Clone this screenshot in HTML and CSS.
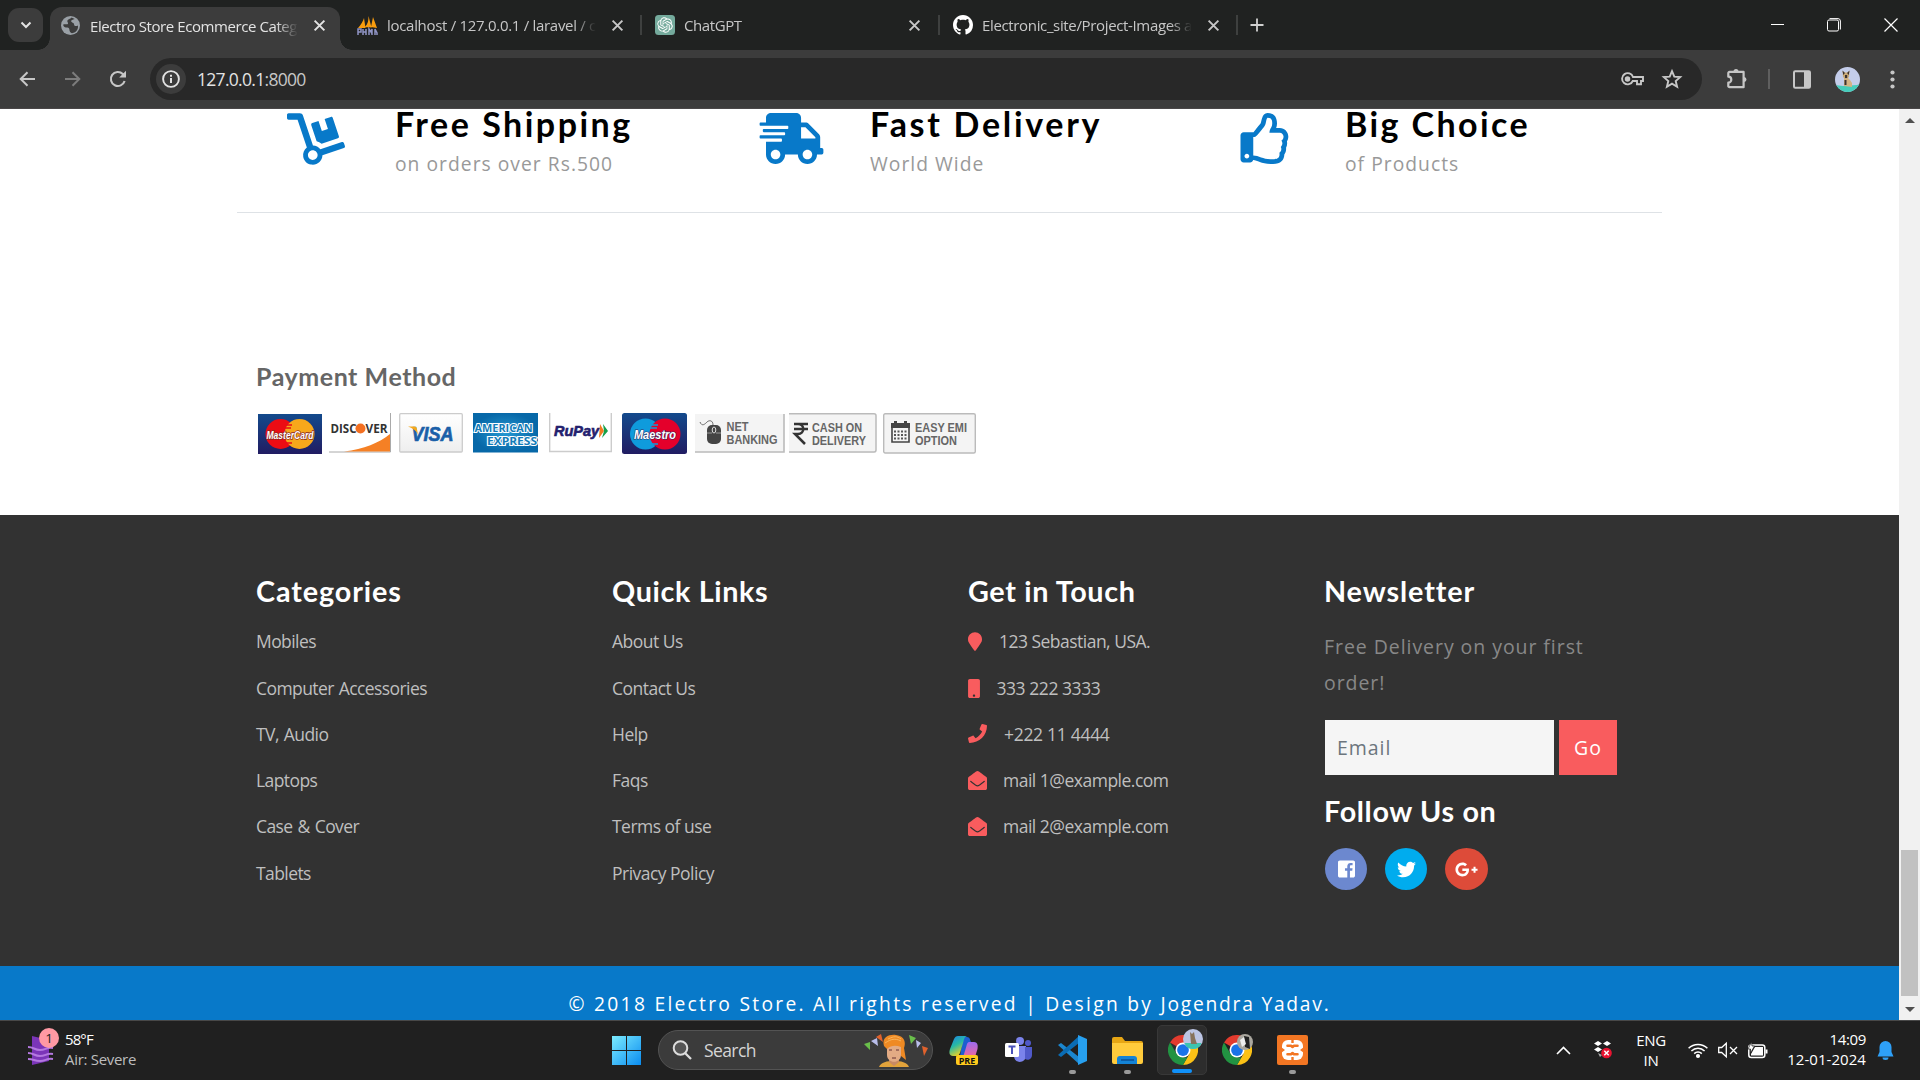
FILE: index.html
```html
<!DOCTYPE html>
<html lang="en">
<head>
<meta charset="utf-8">
<title>Electro Store Ecommerce Category</title>
<link rel="stylesheet" href="styles.css">
</head>
<body>
<svg class="defs" aria-hidden="true">
  <symbol id="x" viewBox="0 0 12 12"><path d="M1.5 1.5l9 9M10.5 1.5l-9 9" fill="none" stroke="currentColor" stroke-width="1.8"/></symbol>
  <symbol id="mail" viewBox="0 0 512 512"><path d="M512 464c0 26.51-21.49 48-48 48H48c-26.51 0-48-21.49-48-48V200.724a48 48 0 0 1 18.387-37.776c24.913-19.529 45.501-35.365 164.2-121.511C199.412 29.17 232.797-.347 256 .003c23.198-.354 56.596 29.172 73.413 41.433 118.687 86.137 139.303 101.995 164.2 121.512A48 48 0 0 1 512 200.724V464zm-65.666-196.605c-2.563-3.728-7.7-4.595-11.339-1.907-22.845 16.873-55.462 40.705-105.582 77.079-16.825 12.266-50.21 41.781-73.413 41.43-23.211.344-56.559-29.143-73.413-41.43-50.114-36.37-82.734-60.204-105.582-77.079-3.639-2.688-8.776-1.821-11.339 1.907l-9.072 13.196a7.998 7.998 0 0 0 1.839 10.967c22.887 16.899 55.454 40.69 105.303 76.868 20.274 14.781 56.524 47.813 92.264 47.573 35.724.242 71.961-32.771 92.263-47.573 49.85-36.179 82.418-59.97 105.303-76.868a7.998 7.998 0 0 0 1.839-10.967l-9.071-13.196z"/></symbol>
  <symbol id="chrome" viewBox="0 0 48 48">
    <path d="M24 24L3.2 12A24 24 0 0 1 44.8 12z" fill="#e33b2e"/>
    <path d="M24 12h20.8A24 24 0 0 1 24 48l10.4-18z" fill="#fbc116"/>
    <path d="M3.2 12L13.6 30 24 36h6.9L24 48A24 24 0 0 1 3.2 12z" fill="#229342"/>
    <circle cx="24" cy="24" r="12" fill="#fff"/><circle cx="24" cy="24" r="9.4" fill="#1a73e8"/>
  </symbol>
</svg>

<header class="tabs">
  <button class="tab-search"><svg width="12" height="8" viewBox="0 0 12 8"><path d="M1.5 1.5L6 6l4.500-4.500" fill="none" stroke="#e3e3e3" stroke-width="2"/></svg></button>
  <div class="tab active">
    <svg width="19" height="19" viewBox="0 0 18 18"><circle cx="9" cy="9" r="9" fill="#9aa0a6"/><path d="M10 1.500c-1 1.500-4 1.500-4 3.500 0 1 1 1.400.6 2.400C6 8.600 3.500 7 2 8.200 2.200 10 4 11 6 11c1.400 0 2 1 2 2.200 0 1.500 1 2.600 2.400 3.200C15 15.500 16.600 12 16 9c-1.600 1-3.500.6-3.600-1C12.300 6 10 6.500 9.600 5 9.400 4 11 3.400 13 2.800z" fill="#3c3c3c"/></svg>
    <span class="tab-title t1">Electro Store Ecommerce Categ</span>
    <svg class="close" width="13" height="13"><use href="#x"/></svg>
  </div>
  <div class="tab">
    <svg width="21" height="21" viewBox="0 0 21 21"><path d="M1 13C4 10 6 6 7 3l1.500 10zM8 12c3-3 3.500-7 3.500-11l3 11.500zM14 12l2-10 4 11z" fill="#f89c0e"/><path d="M1 20v-6h3v3H1m5 3v-6m0 3h3v3m0-6v6m3 0v-6l2 3 1-3v6m3 0v-6l2 4v2" fill="none" stroke="#8f94c4" stroke-width="1.500"/></svg>
    <span class="tab-title t2">localhost / 127.0.0.1 / laravel / c</span>
    <svg class="close" width="13" height="13"><use href="#x"/></svg>
  </div>
  <div class="tab">
    <svg width="20" height="20" viewBox="0 0 20 20"><rect width="20" height="20" rx="3.500" fill="#74aa9c"/><path transform="translate(2.200 2.200) scale(.65)" fill="#fff" d="M22.282 9.821a5.985 5.985 0 0 0-.516-4.91 6.046 6.046 0 0 0-6.51-2.9A6.065 6.065 0 0 0 4.981 4.182a5.985 5.985 0 0 0-3.998 2.9 6.046 6.046 0 0 0 .743 7.097 5.98 5.98 0 0 0 .511 4.91 6.051 6.051 0 0 0 6.515 2.9A5.985 5.985 0 0 0 13.26 24a6.056 6.056 0 0 0 5.772-4.206 5.99 5.99 0 0 0 3.997-2.9 6.056 6.056 0 0 0-.747-7.073zM13.26 22.43a4.476 4.476 0 0 1-2.876-1.041l.142-.08 4.778-2.758a.795.795 0 0 0 .393-.682v-6.737l2.02 1.169a.071.071 0 0 1 .038.052v5.583a4.504 4.504 0 0 1-4.495 4.494zM3.6 18.304a4.47 4.47 0 0 1-.535-3.014l.142.085 4.783 2.759a.771.771 0 0 0 .78 0l5.843-3.369v2.332a.08.08 0 0 1-.033.062L9.74 19.95a4.5 4.5 0 0 1-6.14-1.646zM2.34 7.896a4.485 4.485 0 0 1 2.366-1.973V11.6a.766.766 0 0 0 .388.677l5.815 3.354-2.02 1.168a.076.076 0 0 1-.071 0l-4.83-2.786A4.504 4.504 0 0 1 2.34 7.872zm16.597 3.855l-5.833-3.387L15.12 7.2a.076.076 0 0 1 .071 0l4.83 2.791a4.494 4.494 0 0 1-.676 8.105v-5.678a.79.79 0 0 0-.407-.667zm2.01-3.023l-.141-.085-4.774-2.782a.776.776 0 0 0-.785 0L9.409 9.23V6.897a.066.066 0 0 1 .028-.061l4.83-2.787a4.5 4.5 0 0 1 6.68 4.66zM8.307 12.863l-2.02-1.164a.08.08 0 0 1-.038-.057V6.075a4.5 4.5 0 0 1 7.375-3.453l-.142.08L8.704 5.46a.795.795 0 0 0-.393.681zm1.097-2.365l2.602-1.5 2.607 1.5v2.999l-2.597 1.5-2.607-1.5z"/></svg>
    <span class="tab-title t3">ChatGPT</span>
    <svg class="close" width="13" height="13"><use href="#x"/></svg>
  </div>
  <div class="tab">
    <svg width="20" height="20" viewBox="0 0 16 16"><path fill="#fff" d="M8 0C3.580 0 0 3.580 0 8c0 3.540 2.290 6.530 5.470 7.590.4.070.55-.17.55-.38 0-.19-.01-.82-.01-1.490-2.010.37-2.530-.49-2.690-.94-.09-.23-.48-.94-.82-1.130-.28-.15-.68-.52-.01-.53.63-.01 1.080.58 1.230.82.72 1.210 1.870.87 2.330.66.070-.52.28-.87.51-1.070-1.780-.2-3.640-.89-3.640-3.950 0-.87.31-1.590.82-2.150-.08-.2-.36-1.020.08-2.120 0 0 .67-.21 2.200.82.64-.18 1.320-.27 2-.27s1.360.09 2 .27c1.530-1.040 2.200-.82 2.200-.82.44 1.100.16 1.920.08 2.120.51.56.82 1.270.82 2.150 0 3.070-1.870 3.750-3.650 3.950.29.25.54.73.54 1.480 0 1.070-.01 1.930-.01 2.200 0 .21.15.46.55.38A8.013 8.013 0 0016 8c0-4.420-3.580-8-8-8z"/></svg>
    <span class="tab-title t4">Electronic_site/Project-Images a</span>
    <svg class="close" width="13" height="13"><use href="#x"/></svg>
  </div>
  <svg class="new-tab" width="14" height="14" viewBox="0 0 14 14"><path d="M7 .5v13M.5 7h13" stroke="#d0d0d0" stroke-width="1.800"/></svg>
  <div class="win-controls">
    <svg width="13" height="14" viewBox="0 0 13 14"><path d="M0 6.500h13" stroke="#fff"/></svg>
    <svg width="14" height="14" viewBox="0 0 14 14" fill="none" stroke="#fff"><rect x=".5" y="2" width="11" height="11" rx="1.500"/><path d="M2.500.6H11A2.500 2.500 0 0 1 13.400 3v8.500"/></svg>
    <svg width="14" height="14" viewBox="0 0 14 14"><path d="M.5.5l13 13M13.500.5l-13 13" stroke="#fff" stroke-width="1.200"/></svg>
  </div>
</header>

<nav class="toolbar">
  <svg class="back" width="17" height="16" viewBox="0 0 17 16" fill="none" stroke="#c7c7c7" stroke-width="2"><path d="M16 8H2M8.500 1.200L1.700 8l6.800 6.800"/></svg>
  <svg class="fwd" width="17" height="16" viewBox="0 0 17 16" fill="none" stroke="#7c7c7c" stroke-width="2"><path d="M1 8h14M8.500 1.200L15.300 8l-6.800 6.800"/></svg>
  <svg class="reload" width="18" height="18" viewBox="0 0 18 18"><path d="M15.600 11A7 7 0 1 1 13.800 4l2 2" fill="none" stroke="#c7c7c7" stroke-width="2.100"/><path d="M17 .8V7.600h-6.800z" fill="#c7c7c7"/></svg>
  <div class="url">
    <span class="info"><svg width="18" height="18" viewBox="0 0 18 18"><circle cx="9" cy="9" r="7.900" fill="none" stroke="#e3e3e3" stroke-width="1.900"/><path d="M9 8v5M9 4.800v2" stroke="#e3e3e3" stroke-width="2"/></svg></span>
    <span class="address"><b>127.0.0.1</b>:8000</span>
    <svg class="key" width="23" height="14" viewBox="0 0 23 14" fill="none" stroke="#c7c7c7" stroke-width="1.900"><path d="M12 5h10v4h-2v3.200h-4V9h-4.200a5.600 5.600 0 1 1 .2-4z"/><circle cx="6.500" cy="7" r="1.800" fill="#c7c7c7"/></svg>
    <svg class="star" width="20" height="20" viewBox="0 0 20 20" fill="none" stroke="#c7c7c7" stroke-width="1.900"><path d="M10 2.200l2.300 5.400 5.900.5-4.500 3.900 1.400 5.700-5.100-3-5.100 3 1.400-5.700L1.800 8.100l5.900-.5z"/></svg>
  </div>
  <svg class="ext" width="22" height="22" viewBox="0 0 22 22"><path d="M3.600 3.900h14v15.300h-14a1.300 1.300 0 0 1-1.300-1.300v-3.200a3 3 0 0 0 0-6V5.200a1.300 1.300 0 0 1 1.300-1.300z" fill="none" stroke="#c7c7c7" stroke-width="2.200" stroke-linejoin="round"/><path d="M7.500 3.500a2.500 2.500 0 0 1 5 0zM18 9a2.500 2.500 0 0 1 0 5z" fill="#c7c7c7"/></svg>
  <i class="sep"></i>
  <svg class="panel" width="18" height="19" viewBox="0 0 18 19"><rect x="1" y="1.300" width="16" height="16.400" rx="1.200" fill="none" stroke="#c7c7c7" stroke-width="2"/><path d="M11 1h6v17h-6z" fill="#c7c7c7"/></svg>
  <svg class="avatar" width="25" height="25" viewBox="0 0 25 25"><clipPath id="av"><circle cx="12.500" cy="12.500" r="12.500"/></clipPath><g clip-path="url(#av)"><path d="M0 0h25v25H0z" fill="#c4cdea"/><path d="M0 18l8 1 14-1 3-1v8H0z" fill="#45cdbb"/><path d="M9 19V11l3-1 3 3 2 3v4z" fill="#d3b384"/><path d="M7.500 4l2 1.500h3L14.500 4l-.5 6-3 2.500-3-2.500z" fill="#c9a977"/><path d="M7.500 3.500L10 6l-1.800 2zM14.500 3.500L12 6l1.800 2zM10 8h2.200v3H10zM9.500 13h2v5h-2z" fill="#3b3230"/></g></svg>
  <svg class="dots" width="5" height="19" viewBox="0 0 5 19" fill="#c7c7c7"><circle cx="2.500" cy="2.500" r="2.100"/><circle cx="2.500" cy="9.500" r="2.100"/><circle cx="2.500" cy="16.500" r="2.100"/></svg>
</nav>

<div class="viewport">
  <main class="page">
    <section class="features">
      <div class="feature">
        <svg width="58" height="52" viewBox="0 0 576 512"><path d="M294.200 277.700c18 5 34.700 13.400 49.500 24.700l161.500-53.800c8.400-2.800 12.900-11.900 10.100-20.200L454.900 47.200c-2.800-8.400-11.900-12.900-20.200-10.100l-61.100 20.400 33.100 99.400L346 177l-33.100-99.400-61.600 20.500c-8.400 2.800-12.900 11.900-10.100 20.200l53 159.400zm281 48.700L565 296c-2.800-8.400-11.900-12.900-20.200-10.100l-213.500 71.200c-17.200-22-43.600-36.400-73.500-37L158.400 21.900C154 8.800 141.800 0 128 0H16C7.200 0 0 7.200 0 16v32c0 8.800 7.200 16 16 16h88.900l92.200 276.700c-26.100 20.400-41.700 53.600-36 90.500 6.100 39.400 37.900 72.300 77.300 79.200 60.200 10.700 112.300-34.800 113.400-92.600l213.300-71.200c8.300-2.800 12.900-11.800 10.100-20.200zM256 464c-26.500 0-48-21.500-48-48s21.500-48 48-48 48 21.500 48 48-21.500 48-48 48z"/></svg>
        <div><h3>Free Shipping</h3><p>on orders over Rs.500</p></div>
      </div>
      <div class="feature">
        <svg width="65" height="51" viewBox="0 0 640 512"><path d="M624 352h-16V243.900c0-12.700-5.100-24.900-14.100-33.900L494 110.100c-9-9-21.200-14.100-33.900-14.100H416V48c0-26.500-21.500-48-48-48H112C85.500 0 64 21.500 64 48v48H8c-4.400 0-8 3.600-8 8v16c0 4.400 3.600 8 8 8h272c4.400 0 8 3.600 8 8v16c0 4.400-3.600 8-8 8H40c-4.400 0-8 3.600-8 8v16c0 4.400 3.600 8 8 8h208c4.400 0 8 3.600 8 8v16c0 4.400-3.600 8-8 8H8c-4.400 0-8 3.600-8 8v16c0 4.400 3.600 8 8 8h208c4.400 0 8 3.600 8 8v16c0 4.400-3.600 8-8 8H64v128c0 53 43 96 96 96s96-43 96-96h128c0 53 43 96 96 96s96-43 96-96h48c8.800 0 16-7.200 16-16v-32c0-8.800-7.200-16-16-16zM160 464c-26.500 0-48-21.500-48-48s21.500-48 48-48 48 21.500 48 48-21.500 48-48 48zm320 0c-26.500 0-48-21.500-48-48s21.500-48 48-48 48 21.500 48 48-21.500 48-48 48zm80-208H416V144h44.100l99.900 99.900V256z"/></svg>
        <div><h3>Fast Delivery</h3><p>World Wide</p></div>
      </div>
      <div class="feature">
        <svg width="52" height="51" viewBox="0 0 512 512"><path d="M466.270 286.690C475.040 271.840 480 256 480 236.850c0-44.015-37.218-85.580-85.820-85.580H357.700c4.920-12.810 8.850-28.130 8.850-46.540C366.550 31.936 328.860 0 271.280 0c-61.607 0-58.093 94.933-71.760 108.600-22.747 22.747-49.615 66.447-68.760 83.400H32c-17.673 0-32 14.327-32 32v240c0 17.673 14.327 32 32 32h64c14.893 0 27.408-10.174 30.978-23.950 44.509 1.001 75.060 39.940 177.802 39.940 7.220 0 15.220.01 22.220.01 77.117 0 111.986-39.423 112.940-95.330 13.319-18.425 20.299-43.122 17.340-66.990 9.854-18.452 13.664-40.343 8.990-62.990zm-61.750 53.830c12.560 21.130 1.260 49.410-13.940 57.570 7.700 48.780-17.608 65.900-53.120 65.900h-37.820c-71.639 0-118.029-37.820-171.640-37.820V240h10.920c28.360 0 67.980-70.890 94.540-97.460 28.360-28.360 18.910-75.630 37.820-94.540 47.270 0 47.270 32.980 47.270 56.730 0 39.170-28.360 56.720-28.360 94.540h103.990c21.110 0 37.730 18.910 37.820 37.820.09 18.900-12.820 37.810-22.270 37.810 13.489 14.555 16.371 45.236-5.210 65.620zM88 432c0 13.255-10.745 24-24 24s-24-10.745-24-24 10.745-24 24-24 24 10.745 24 24z"/></svg>
        <div><h3>Big Choice</h3><p>of Products</p></div>
      </div>
    </section>

    <section class="payment">
      <h4>Payment Method</h4>
      <div class="cards">
        <svg width="64" height="41" viewBox="0 0 64 41"><defs><linearGradient id="g1" x2="0" y2="1"><stop stop-color="#134a8c"/><stop offset="1" stop-color="#211c62"/></linearGradient></defs><rect y="1" width="64" height="40" fill="url(#g1)"/><circle cx="22.500" cy="21" r="15" fill="#ec0c14"/><circle cx="41.500" cy="21" r="15" fill="#f7a81b"/><path d="M27 12h7M26 15h7M28 30h6" stroke="#ec0c14" stroke-width="1.500"/><text x="32" y="25.500" class="logo" font-size="11" textLength="47" lengthAdjust="spacingAndGlyphs" fill="#fff" stroke="#8c2a20" stroke-width="1.500">MasterCard</text></svg>
        <svg class="discover" width="63" height="41" viewBox="0 0 63 41"><path d="M61.500 0v39H0" fill="none" stroke="#aaa"/><path d="M15 38.500C35 36 50 30 61 21v17.500z" fill="#f58025"/><circle cx="31.500" cy="15.500" r="5" fill="#f36f21"/><text x="14.500" y="20" class="mark" font-size="13" textLength="26" lengthAdjust="spacingAndGlyphs" fill="#333">DISC</text><text x="47.500" y="20" class="mark" font-size="13" textLength="22" lengthAdjust="spacingAndGlyphs" fill="#333">VER</text></svg>
        <svg class="visa" width="64" height="41" viewBox="0 0 64 41"><defs><linearGradient id="g2" x2="0" y2="1"><stop stop-color="#fff"/><stop offset="1" stop-color="#eee"/></linearGradient></defs><rect x=".7" y=".7" width="62.600" height="38.300" rx="1" fill="url(#g2)" stroke="#ccc" stroke-width="1.300"/><text x="33.500" y="27.500" class="logo" font-size="20" textLength="42" lengthAdjust="spacingAndGlyphs" fill="#1a5fa8" stroke="#1a5fa8" stroke-width=".7">VISA</text><path d="M9 13.500h6c2 0 3 1 3 3l1 5c-2-4-5-6-10-8z" fill="#f4a81d"/></svg>
        <svg class="amex" width="65" height="41" viewBox="0 0 65 41"><defs><radialGradient id="g3"><stop stop-color="#2699d2"/><stop offset="1" stop-color="#0768a8"/></radialGradient></defs><rect width="65" height="39.500" fill="url(#g3)"/><g class="mark" font-size="10.500" fill="#147db9" stroke="#fff" stroke-width="2"><text x="30.500" y="18.500" textLength="58" lengthAdjust="spacingAndGlyphs">AMERICAN</text><text x="39" y="31.500" textLength="50" lengthAdjust="spacingAndGlyphs">EXPRESS</text></g></svg>
        <svg class="rupay" width="63" height="41" viewBox="0 0 63 41"><path d="M.7 0v38.500h61.600V0" fill="none" stroke="#ccc" stroke-width="1.400"/><text x="27.500" y="23" class="logo" font-size="14.500" textLength="45" lengthAdjust="spacingAndGlyphs" fill="#23206e" stroke="#23206e" stroke-width=".6">RuPay</text><path d="M51 11l4 7-5 7z" fill="#f47920"/><path d="M54 11l5 7-6 7 2-7z" fill="#16a04a"/></svg>
        <svg class="maestro" width="65" height="41" viewBox="0 0 65 41"><rect width="65" height="41" rx="2.500" fill="url(#g1)"/><circle cx="23.500" cy="21" r="15.500" fill="#0f9bdc"/><circle cx="43" cy="21" r="15.500" fill="#e4002b"/><path d="M29 12h7M28 15h7M30 31h6" stroke="#0f9bdc" stroke-width="1.500"/><text x="33" y="25.500" class="logo" font-size="12" textLength="42" lengthAdjust="spacingAndGlyphs" fill="#fff" stroke="#343066" stroke-width="1">Maestro</text></svg>
        <svg class="net" width="90" height="41" viewBox="0 0 90 41"><path d="M0 1h89v38H0z" fill="#f4f4f4"/><path d="M89 1v38H0" fill="none" stroke="#bbb" stroke-width="1.600"/><rect x="12" y="12" width="14" height="19" rx="5" fill="#444"/><path d="M5 9c2 5 5 2 7 0s6-2 6 3" fill="none" stroke="#666"/><ellipse cx="19" cy="17" rx="1.800" ry="3" fill="#444" stroke="#ddd"/><path d="M12 20h5m4 0h5" stroke="#999"/><g class="opt"><text x="31.500" y="17.500" textLength="22" lengthAdjust="spacingAndGlyphs">NET</text><text x="31.500" y="30.500" textLength="51" lengthAdjust="spacingAndGlyphs">BANKING</text></g></svg>
        <svg class="cod" width="89" height="41" viewBox="0 0 89 41"><path d="M0 .7h87v39H0z" fill="#f4f4f4"/><path d="M0 .7h85q2 0 2 2V37q0 2-2 2H0" fill="none" stroke="#bbb" stroke-width="1.500"/><path d="M5 11h14M5 16h14M6 11h3c7 0 7 10 0 10H6l10 10" fill="none" stroke="#333" stroke-width="2.500"/><g class="opt"><text x="23" y="19" textLength="50" lengthAdjust="spacingAndGlyphs">CASH ON</text><text x="23" y="31.500" textLength="54" lengthAdjust="spacingAndGlyphs">DELIVERY</text></g></svg>
        <svg class="emi" width="93" height="41" viewBox="0 0 93 41"><rect x=".7" y=".7" width="91.600" height="39.300" rx="1.500" fill="#f4f4f4" stroke="#bbb" stroke-width="1.400"/><path d="M9 11h17v18H9z" fill="#f4f4f4" stroke="#444" stroke-width="1.600"/><path d="M8 10h19v5H8zM11 8h3v4h-3zM21 8h3v4h-3z" fill="#444"/><path d="M11 18.500h13M11 22h13M11 25.500h13" stroke="#555" stroke-width="2" stroke-dasharray="2 1.500"/><g class="opt"><text x="32" y="18.500" textLength="52" lengthAdjust="spacingAndGlyphs">EASY EMI</text><text x="32" y="31.500" textLength="42" lengthAdjust="spacingAndGlyphs">OPTION</text></g></svg>
      </div>
    </section>

    <footer class="footer">
      <div class="col cats">
        <h3>Categories</h3>
        <ul><li>Mobiles</li><li>Computer Accessories</li><li>TV, Audio</li><li>Laptops</li><li>Case &amp; Cover</li><li>Tablets</li></ul>
      </div>
      <div class="col">
        <h3>Quick Links</h3>
        <ul><li>About Us</li><li>Contact Us</li><li>Help</li><li>Faqs</li><li>Terms of use</li><li>Privacy Policy</li></ul>
      </div>
      <div class="col touch">
        <h3>Get in Touch</h3>
        <ul>
          <li><svg width="14" height="19" viewBox="0 0 384 512"><path d="M172.268 501.670C26.970 291.031 0 269.413 0 192 0 85.961 85.961 0 192 0s192 85.961 192 192c0 77.413-26.970 99.031-172.268 309.670-9.535 13.774-29.930 13.773-39.464 0z"/></svg><span class="addr">123 Sebastian, USA.</span></li>
          <li><svg width="12" height="19" viewBox="0 0 320 512"><path d="M272 0H48C21.500 0 0 21.500 0 48v416c0 26.500 21.500 48 48 48h224c26.500 0 48-21.500 48-48V48c0-26.500-21.500-48-48-48zM160 480c-17.700 0-32-14.300-32-32s14.300-32 32-32 32 14.300 32 32-14.300 32-32 32z"/></svg><span class="mob">333 222 3333</span></li>
          <li><svg width="19" height="19" viewBox="0 0 512 512"><path d="M493.400 24.600l-104-24c-11.300-2.600-22.900 3.300-27.500 13.900l-48 112c-4.200 9.800-1.400 21.300 6.900 28l60.600 49.600c-36 76.700-98.900 140.500-177.200 177.200l-49.600-60.600c-6.800-8.300-18.200-11.100-28-6.900l-112 48C3.900 366.500-2 378.100.6 389.400l24 104C27.100 504.200 36.700 512 48 512c256.100 0 464-207.500 464-464 0-11.200-7.700-20.900-18.600-23.400z"/></svg><span class="tel">+222 11 4444</span></li>
          <li><svg width="19" height="19"><use href="#mail"/></svg><span class="mail">mail 1@example.com</span></li>
          <li><svg width="19" height="19"><use href="#mail"/></svg><span class="mail">mail 2@example.com</span></li>
        </ul>
      </div>
      <div class="col">
        <h3 class="news">Newsletter</h3>
        <p class="lead">Free Delivery on your first order!</p>
        <form class="subscribe"><span class="email">Email</span><span class="go">Go</span></form>
        <h3>Follow Us on</h3>
        <div class="social">
          <a class="fb"><svg width="17" height="20" viewBox="0 0 448 512"><path d="M448 80v352c0 26.500-21.500 48-48 48h-85.300V302.800h60.600l8.700-67.600h-69.300V192c0-19.600 5.400-32.900 33.500-32.900H384V98.700c-6.200-.8-27.400-2.700-52.200-2.700-51.600 0-87 31.500-87 89.400v49.900H184v67.600h60.900V480H48c-26.500 0-48-21.500-48-48V80c0-26.500 21.500-48 48-48h352c26.500 0 48 21.500 48 48z"/></svg></a>
          <a class="tw"><svg width="19" height="19" viewBox="0 0 512 512"><path d="M459.370 151.716c.325 4.548.325 9.097.325 13.645 0 138.720-105.583 298.558-298.558 298.558-59.452 0-114.680-17.219-161.137-47.106 8.447.974 16.568 1.299 25.340 1.299 49.055 0 94.213-16.568 130.274-44.832-46.132-.975-84.792-31.188-98.112-72.772 6.498.974 12.995 1.624 19.818 1.624 9.421 0 18.843-1.300 27.614-3.573-48.081-9.747-84.143-51.980-84.143-102.985v-1.299c13.969 7.797 30.214 12.670 47.431 13.319-28.264-18.843-46.781-51.005-46.781-87.391 0-19.492 5.197-37.360 14.294-52.954 51.655 63.675 129.300 105.258 216.365 109.807-1.624-7.797-2.599-15.918-2.599-24.040 0-57.828 46.782-104.934 104.934-104.934 30.213 0 57.502 12.670 76.670 33.137 23.715-4.548 46.456-13.320 66.599-25.340-7.798 24.366-24.366 44.833-46.132 57.827 21.117-2.273 41.584-8.122 60.426-16.243-14.292 20.791-32.161 39.308-52.628 54.253z"/></svg></a>
          <a class="gp"><svg width="23" height="19" viewBox="0 0 640 512"><path d="M386.061 228.496c1.834 9.692 3.143 19.384 3.143 31.956C389.204 370.205 315.599 448 204.800 448c-106.084 0-192-85.915-192-192s85.916-192 192-192c51.864 0 95.083 18.859 128.611 50.292l-52.126 50.030c-14.145-13.621-39.028-29.599-76.485-29.599-65.484 0-118.920 54.221-118.920 121.277 0 67.056 53.436 121.277 118.920 121.277 75.961 0 104.513-54.745 108.965-82.773H204.800v-66.009h181.261zm185.406 6.437V179.200h-56.001v55.733h-55.733v56.001h55.733v55.733h56.001v-55.733H627.200v-56.001h-55.733z"/></svg></a>
        </div>
      </div>
    </footer>
    <div class="copyright"><p>© 2018 Electro Store. All rights reserved | Design by <span>Jogendra Yadav.</span></p></div>
  </main>
  <aside class="scrollbar"><i class="up"></i><i class="thumb"></i><i class="down"></i></aside>
</div>

<footer class="taskbar">
  <div class="weather">
    <svg width="34" height="38" viewBox="0 0 34 38"><path d="M4 8l17 4v21L4 37z" fill="#7b35b8"/><path d="M0 19c6 0 6 3 12 3s6-3 13-2M0 25c6 0 6 3 12 3s6-3 13-2M0 31c6 0 6 2 12 2s6-3 13-2" fill="none" stroke="#b478e0" stroke-width="2"/><circle cx="21" cy="10" r="10" fill="#ff99a4"/><text x="21" y="15" font-size="13.500" text-anchor="middle" fill="#222">1</text></svg>
    <div><p class="temp">58°F</p><p class="air">Air: Severe</p></div>
  </div>
  <div class="apps">
    <svg class="start" width="30" height="30" viewBox="0 0 30 30"><defs><linearGradient id="w" x2="1" y2="1"><stop stop-color="#7cecff"/><stop offset="1" stop-color="#0a8cf0"/></linearGradient></defs><path d="M0 1h14v14H0zM15 1h14v14H15zM0 16h14v14H0zM15 16h14v14H15z" fill="url(#w)"/></svg>
    <div class="search">
      <svg width="20" height="20" viewBox="0 0 20 20"><circle cx="8.500" cy="8" r="6.800" fill="#555" stroke="#ddd" stroke-width="2"/><path d="M13 13l6 6" stroke="#ddd" stroke-width="2.300"/></svg>
      <span>Search</span>
      <svg class="art" width="66" height="34" viewBox="0 0 66 34"><path d="M1 11l6-2 0 8zM46 2l7 3-5 6z" fill="#6abf4b"/><path d="M8 8l6-3 1 8zM53 7l5 3-4 5z" fill="#b9bdea"/><path d="M13 4l5-3 2 8zM59 13l6 2-4 8z" fill="#e0622d"/><path d="M16 34c2-5 8-6 15-6s13 1 15 6z" fill="#e2a33b"/><path d="M26 21h10v8l-5 4-5-4z" fill="#c98a63"/><path d="M24 12h14v10c0 9-14 9-14 0z" fill="#e3ab84"/><path d="M21 13C18 3 28 1 33 2c9 1 10 8 8 13l2 12-5-4V14c-5-2-10-2-14 2z" fill="#ef8a24"/><path d="M22 10c6-4 10-5 16-2M25 6c6-3 9-3 13 0" fill="none" stroke="#f9b45a"/><path d="M26 17h3m4 0h3m-7 8h4" stroke="#633"/></svg>
    </div>
    <svg width="30" height="30" class="copilot" viewBox="0 0 30 30"><defs><linearGradient id="c1" x2=".5" y2="1"><stop stop-color="#1b7fe8"/><stop offset=".5" stop-color="#27b9a5"/><stop offset="1" stop-color="#f4d21f"/></linearGradient><linearGradient id="c2" x2="0" y2="1"><stop stop-color="#9b6bf0"/><stop offset="1" stop-color="#f0679b"/></linearGradient></defs><path d="M14 2h4c3 0 3 3 4 5l-6 14h-5z" fill="#1d5fd0"/><path d="M9 1h9c-3 1-3 4-4 7l-3 10c-1 2-2 3-4 3H4c-4 0-4-4-3-7L5 4c1-2 2-3 4-3z" fill="url(#c1)"/><path d="M20 7h5c4 0 4 4 3.500 7L26 22H12c3-1 3-3 4-6l2-7c.5-1 1-2 2-2z" fill="url(#c2)"/><rect x="7" y="20" width="22" height="10" rx="2" fill="#ffca1c"/><text x="18" y="28.500" class="mark" font-size="9" fill="#111">PRE</text></svg>
    <svg width="27" height="26" class="teams" viewBox="0 0 27 26"><circle cx="15" cy="4" r="4" fill="#7b83eb"/><circle cx="23" cy="6" r="3" fill="#5059c9"/><path d="M10 9h11v9c0 9-12 9-12 1z" fill="#7b83eb"/><path d="M20 10h7v8c0 4-4 6-7 4z" fill="#5059c9"/><rect y="6" width="14" height="14" rx="1.500" fill="#fff"/><path d="M3.500 9.500h7M7 9.500V17" stroke="#4b53bc" stroke-width="2"/></svg>
    <span class="app run vs"><svg width="30" height="30" viewBox="0 0 30 30"><path d="M1 10l3-2 18 14v7z" fill="#1b87d0"/><path d="M1 20l3 2L22 8V1z" fill="#0a6cb4"/><path d="M21 0l9 4v22l-9 4z" fill="#27a0f0"/></svg></span>
    <span class="app run fold"><svg width="31" height="27" viewBox="0 0 31 27"><path d="M0 2q0-2 2-2h8l3 4h16q2 0 2 2v5H0z" fill="#e7a614"/><path d="M0 6h31v19q0 2-2 2H2q-2 0-2-2z" fill="#ffcb3c"/><path d="M5 27v-5q0-3 3-3h14q3 0 3 3v5z" fill="#1483d6"/><path d="M9 23h13" stroke="#0a4f94" stroke-width="1.500"/></svg></span>
    <span class="app current"><svg width="46" height="50" viewBox="0 0 46 50"><use href="#chrome" x="9" y="10" width="30" height="30"/><circle cx="34" cy="14" r="10" fill="#bcc5e4"/><path d="M25.500 18h17q-2 6-8.500 6t-8.500-6z" fill="#3cc4b0"/><path d="M31 7l2 2 2-2 1 6 2 6h-6z" fill="#87735c"/></svg></span>
    <span class="app c2"><svg width="30" height="32" viewBox="0 0 30 32"><use href="#chrome" x="0" y="1" width="30" height="30"/><circle cx="23" cy="8" r="8" fill="#aaa79f"/><path d="M22 2l5 1 1 12-5-2z" fill="#222"/><path d="M18 6l4-3 2 7-4 3z" fill="#eee"/></svg></span>
    <span class="app run xa"><svg width="31" height="30" viewBox="0 0 31 30"><rect width="31" height="30" rx="2" fill="#f37623"/><rect x="5" y="5" width="21" height="20" rx="6" fill="#fff"/><path d="M15.500 3v5M15.500 22v5" stroke="#f37623" stroke-width="2.400"/><path d="M4 12l4 3-4 3zM27 12l-4 3 4 3z" fill="#f37623"/><path d="M10.500 10.700h3.500l1.500 1.300 1.500-1.300h3.500M10.500 19.300h3.500l1.500-1.300 1.500 1.300h3.500" fill="none" stroke="#f37623" stroke-width="2.600" stroke-linecap="round" stroke-linejoin="round"/></svg></span>
  </div>
  <div class="tray">
    <svg class="chev" width="15" height="9" viewBox="0 0 15 9"><path d="M1 8l6.500-6.500L14 8" fill="none" stroke="#fff" stroke-width="1.600"/></svg>
    <svg class="drop" width="18" height="18" viewBox="0 0 18 18"><path d="M4 0l4 2.500L4 5 0 2.500zM13 0l4 2.500L13 5 9 2.500zM4 6l4 2.500L4 11 0 8.500z" fill="#fff"/><path d="M4 12l4 2-2 2z" fill="#aaa"/><circle cx="12.500" cy="12" r="5.300" fill="#e81330"/><path d="M10.300 9.800l4.400 4.400m0-4.400l-4.400 4.400" stroke="#fff" stroke-width="1.500"/></svg>
    <div class="lang"><p>ENG</p><p>IN</p></div>
    <svg class="wifi" width="20" height="16" viewBox="0 0 20 16" fill="none" stroke="#fff" stroke-width="1.500"><path d="M.6 6.300a13.300 13.300 0 0 1 18.800 0M3.400 9a9.300 9.300 0 0 1 13.200 0M6.200 11.600a5.400 5.400 0 0 1 7.600 0"/><circle cx="10" cy="14" r="1.300" fill="#fff"/></svg>
    <svg class="vol" width="20" height="16" viewBox="0 0 20 16" fill="none" stroke="#fff" stroke-width="1.300"><path d="M.7 5.500h3L8.300 1.200v13.600L3.700 10.500h-3zM12 5l7 7m0-7l-7 7"/></svg>
    <svg class="bat" width="20" height="17" viewBox="0 0 20 17"><rect x=".8" y="3" width="16" height="12.500" rx="2.500" fill="none" stroke="#fff" stroke-width="1.500"/><path d="M3 13.500V12l4-7h8v8.500zM17.500 7.500h2v4h-2z" fill="#fff"/><path d="M3.500 0L0 7h2.500v4L6.500 4H4z" fill="#fff" stroke="#202020" stroke-width=".7"/></svg>
    <div class="clock"><p class="time">14:09</p><p class="date">12-01-2024</p></div>
    <svg class="bell" width="17" height="19" viewBox="0 0 17 19"><path d="M8.500 0a6 6 0 0 1 6 6v5l2 4.500h-16l2-4.500V6a6 6 0 0 1 6-6zM5.500 16.500h6a3 2.500 0 0 1-6 0z" fill="#2ea0f8"/></svg>
  </div>
</footer>
</body>
</html>
```
FILE: styles.css
```css
* { box-sizing: border-box; margin: 0; padding: 0; }
html, body { width: 1920px; height: 1080px; overflow: hidden; }
body { display: flex; flex-direction: column; background: #fff; font-family: "Open Sans", "Noto Sans", sans-serif; }
svg { display: block; flex: none; overflow: visible; }
ul { list-style: none; }
.defs { position: absolute; width: 0; height: 0; }

/* tab strip */
.tabs { display: flex; height: 50px; padding-left: 8px; background: #202221; font-size: 15px; color: #c7c7c7; flex: none; }
.tab-search { width: 35px; height: 34px; margin: 8px 7px 0 0; border: 0; border-radius: 11px; background: #3c3c3c; display: flex; align-items: center; justify-content: center; }
.tab { display: flex; align-items: center; position: relative; width: 298px; padding: 0 18px 0 14px; }
.tab > svg:first-child { margin-right: 9px; }
.tab.active { width: 290px; height: 43px; margin-top: 7px; padding: 0 14px 6px 11px; border-radius: 12px 12px 0 0; background: #3c3c3c; color: #e3e3e3; }
.tab.active > svg:first-child { margin-right: 10px; }
.tab.active::before, .tab.active::after { content: ""; position: absolute; bottom: 0; width: 12px; height: 12px; }
.tab.active::before { left: -12px; background: radial-gradient(circle at 0 0, transparent 11.5px, #3c3c3c 12px); }
.tab.active::after { right: -12px; background: radial-gradient(circle at 100% 0, transparent 11.5px, #3c3c3c 12px); }
.tab:not(.active)::after { content: ""; position: absolute; right: -1px; top: 15px; width: 2px; height: 20px; background: #3e403f; }
.tab:not(.active) { height: 50px; }
.tab.active + .tab { width: 301px; padding-left: 17px; }
.tab-title { flex: 1; white-space: nowrap; line-height: 24px; -webkit-mask-image: linear-gradient(90deg, #000 calc(100% - 22px), transparent); mask-image: linear-gradient(90deg, #000 calc(100% - 22px), transparent); }
.close { margin-left: 15px; }
.t1 { letter-spacing: -.42px; }
.t2 { letter-spacing: -.3px; }
.t3 { letter-spacing: -.4px; }
.t4 { letter-spacing: -.35px; }
.new-tab { margin: 18px 0 0 13px; }
.win-controls { display: flex; align-items: center; height: 49px; margin-left: auto; padding-right: 22px; gap: 43px; color: #fff; }

/* toolbar */
.toolbar { display: flex; align-items: center; height: 59px; flex: none; background: #3c3c3c; border-bottom: 1px solid #4a4748; padding-left: 19px; }
.back { margin-right: 28px; }
.fwd { margin-right: 28px; }
.reload { margin-right: 24px; }
.url { display: flex; align-items: center; width: 1552px; height: 42px; margin-left: -1px; border-radius: 21px; background: #282828; padding: 0 20px 0 6px; color: #c7c7c7; }
.info { display: flex; align-items: center; justify-content: center; width: 30px; height: 30px; border-radius: 50%; background: #3c3c3c; }
.address { margin: 0 auto 0 11px; font-size: 17.5px; letter-spacing: -.7px; }
.address b { font-weight: 400; color: #e3e3e3; }
.key { margin-right: 18px; }
.ext { margin: 0 20px 0 24px; }
.sep { width: 2px; height: 20px; margin-right: 23px; background: #5f5f5f; }
.avatar { margin: 0 30px 0 24px; }

/* page */
.viewport { display: flex; height: 911px; flex: none; overflow: hidden; }
.page { width: 1899px; background: #fff; }
.features { display: flex; width: 1425px; height: 104px; margin-left: 237px; border-bottom: 1px solid #dee2e6; }
.feature { display: flex; width: 475px; }
.feature > svg { margin-top: 4px; fill: #0879c9; }
.feature:nth-child(1) > svg { margin-left: 50px; margin-right: 50px; }
.feature:nth-child(2) > svg { margin-left: 47px; margin-right: 46px; }
.feature:nth-child(3) > svg { margin-left: 53px; margin-right: 53px; }
h3, h4 { font-family: Lato, sans-serif; font-weight: 700; }
.feature h3 { font-size: 34px; line-height: 30px; letter-spacing: 2.5px; color: #000; white-space: nowrap; }
.feature:nth-child(2) h3 { letter-spacing: 2.7px; }
.feature:nth-child(3) h3 { letter-spacing: 2.4px; }
.feature p { margin-top: 8px; font-size: 19.25px; line-height: 34px; letter-spacing: 1.03px; color: #999; white-space: nowrap; }
.payment { height: 302px; padding: 148px 0 0 256px; }
.payment h4 { font-size: 25px; line-height: 30px; letter-spacing: .55px; color: #666; }
.cards { display: flex; margin: 22px 0 0 2px; }
.discover { margin-left: 7px; }
.visa { margin-left: 7px; }
.amex { margin-left: 10px; }
.rupay { margin-left: 11px; }
.maestro { margin-left: 10px; }
.net { margin-left: 8px; }
.cod { margin-left: 4px; }
.emi { margin-left: 5px; }
.logo { font-family: "Liberation Sans", Arial, sans-serif; font-style: italic; font-weight: 700; text-anchor: middle; paint-order: stroke; }
.mark { font-family: "Open Sans", sans-serif; font-weight: 700; text-anchor: middle; paint-order: stroke; }
.opt { font: 700 13px "Liberation Sans", Arial, sans-serif; fill: #666; }

.footer { display: grid; grid-template-columns: repeat(4, 356px); height: 451px; padding: 59px 0 0 256px; background: #323232; }
.footer h3 { font-size: 28.75px; line-height: 34px; letter-spacing: .65px; color: #fff; white-space: nowrap; }
.footer .cats h3, .footer h3.news { letter-spacing: .9px; }
.footer ul { margin-top: 10px; }
.footer li { display: flex; align-items: center; height: 46.35px; font-size: 17.5px; line-height: 46.35px; letter-spacing: -.52px; color: #bfbfbf; white-space: nowrap; }
.footer li:nth-child(2) { padding-top: 1px; }
.cats li { word-spacing: 1px; letter-spacing: -.58px; }
.touch li svg { fill: #f95c5e; }
.addr { margin-left: 17px; }
.mob { margin-left: 16.5px; letter-spacing: -.45px; }
.tel { margin-left: 17px; letter-spacing: -.3px; }
.mail { margin-left: 16px; letter-spacing: -.5px; }
.lead { width: 290px; margin-top: 21px; font-size: 19.5px; line-height: 36px; letter-spacing: .94px; color: #888; }
.subscribe { display: flex; gap: 5px; height: 55px; margin: 19px 0 19px 1px; font-size: 19.5px; line-height: 55px; letter-spacing: .95px; }
.email { width: 229px; padding-left: 12px; background: #f5f5f5; color: #6c757d; }
.go { width: 58px; background: #f95c5e; color: #fff; text-align: center; }
.social { display: flex; gap: 18px; margin: 20px 0 0 1px; }
.social a { display: flex; align-items: center; justify-content: center; width: 42px; height: 42px; border-radius: 50%; }
.social svg { fill: #fff; }
.fb { background: #6c88cf; }
.tw { background: #00acee; }
.social .gp { width: 43px; background: #dd4b39; }
.copyright { height: 54px; padding-top: 23px; background: #0879c9; color: #fff; text-align: center; font-size: 19.25px; line-height: 30px; letter-spacing: 2.27px; }
.copyright span { letter-spacing: 1.75px; }

.scrollbar { display: flex; flex-direction: column; align-items: center; width: 21px; background: #f1f1f1; }
.up, .down { width: 0; height: 0; border: 5px solid transparent; }
.up { margin-top: 4px; border-bottom-color: #505050; }
.thumb { width: 17px; height: 146px; margin-top: 727px; background: #c1c1c1; }
.down { margin-top: 11px; border-top-color: #505050; }

/* taskbar */
.taskbar { display: flex; height: 60px; flex: none; background: #202020; border-top: 1px solid #484848; color: #fff; }
.taskbar p { font-size: 15px; line-height: 20px; white-space: nowrap; }
.weather { display: flex; width: 612px; padding: 7px 0 0 28px; }
.weather > div { margin: 1px 0 0 3px; }
.weather .temp { letter-spacing: -.9px; }
.weather .air { color: #bdbdbd; letter-spacing: -.3px; }
.apps { display: flex; align-items: center; width: 944px; height: 58px; }
.search { display: flex; align-items: center; width: 275px; height: 40px; margin: 0 16px; padding: 0 3px 0 13px; border: 1px solid #535353; border-radius: 20px; background: #3b3b3b; }
.search span { margin: 0 auto 0 12px; font-size: 17.5px; letter-spacing: -.6px; color: #d5d5d5; }
.teams { margin-left: 26px; }
.app { display: flex; align-items: center; justify-content: center; position: relative; width: 50px; height: 50px; }
.run::after, .current::after { content: ""; position: absolute; bottom: 1px; width: 7px; height: 4px; border-radius: 2px; background: #9a9a9a; }
.current::after { width: 20px; background: #1090f8; }
.vs { margin-left: 15px; }
.fold { margin-left: 5px; }
.current { margin-left: 5px; border: 1px solid #383838; border-radius: 5px; background: #2d2d2d; }
.c2 { margin-left: 5px; }
.xa { margin-left: 5px; }
.tray { display: flex; align-items: center; height: 58px; }
.drop { margin-left: 23px; }
.lang { width: 46px; margin: 0 0 0 16px; text-align: center; letter-spacing: -.3px; }
.wifi { margin-left: 14px; }
.vol { margin-left: 10px; }
.bat { margin-left: 10px; }
.clock { width: 98px; margin-top: -2px; text-align: right; letter-spacing: -.35px; }
.date { letter-spacing: .05px; }
.bell { margin-left: 11px; }
```
